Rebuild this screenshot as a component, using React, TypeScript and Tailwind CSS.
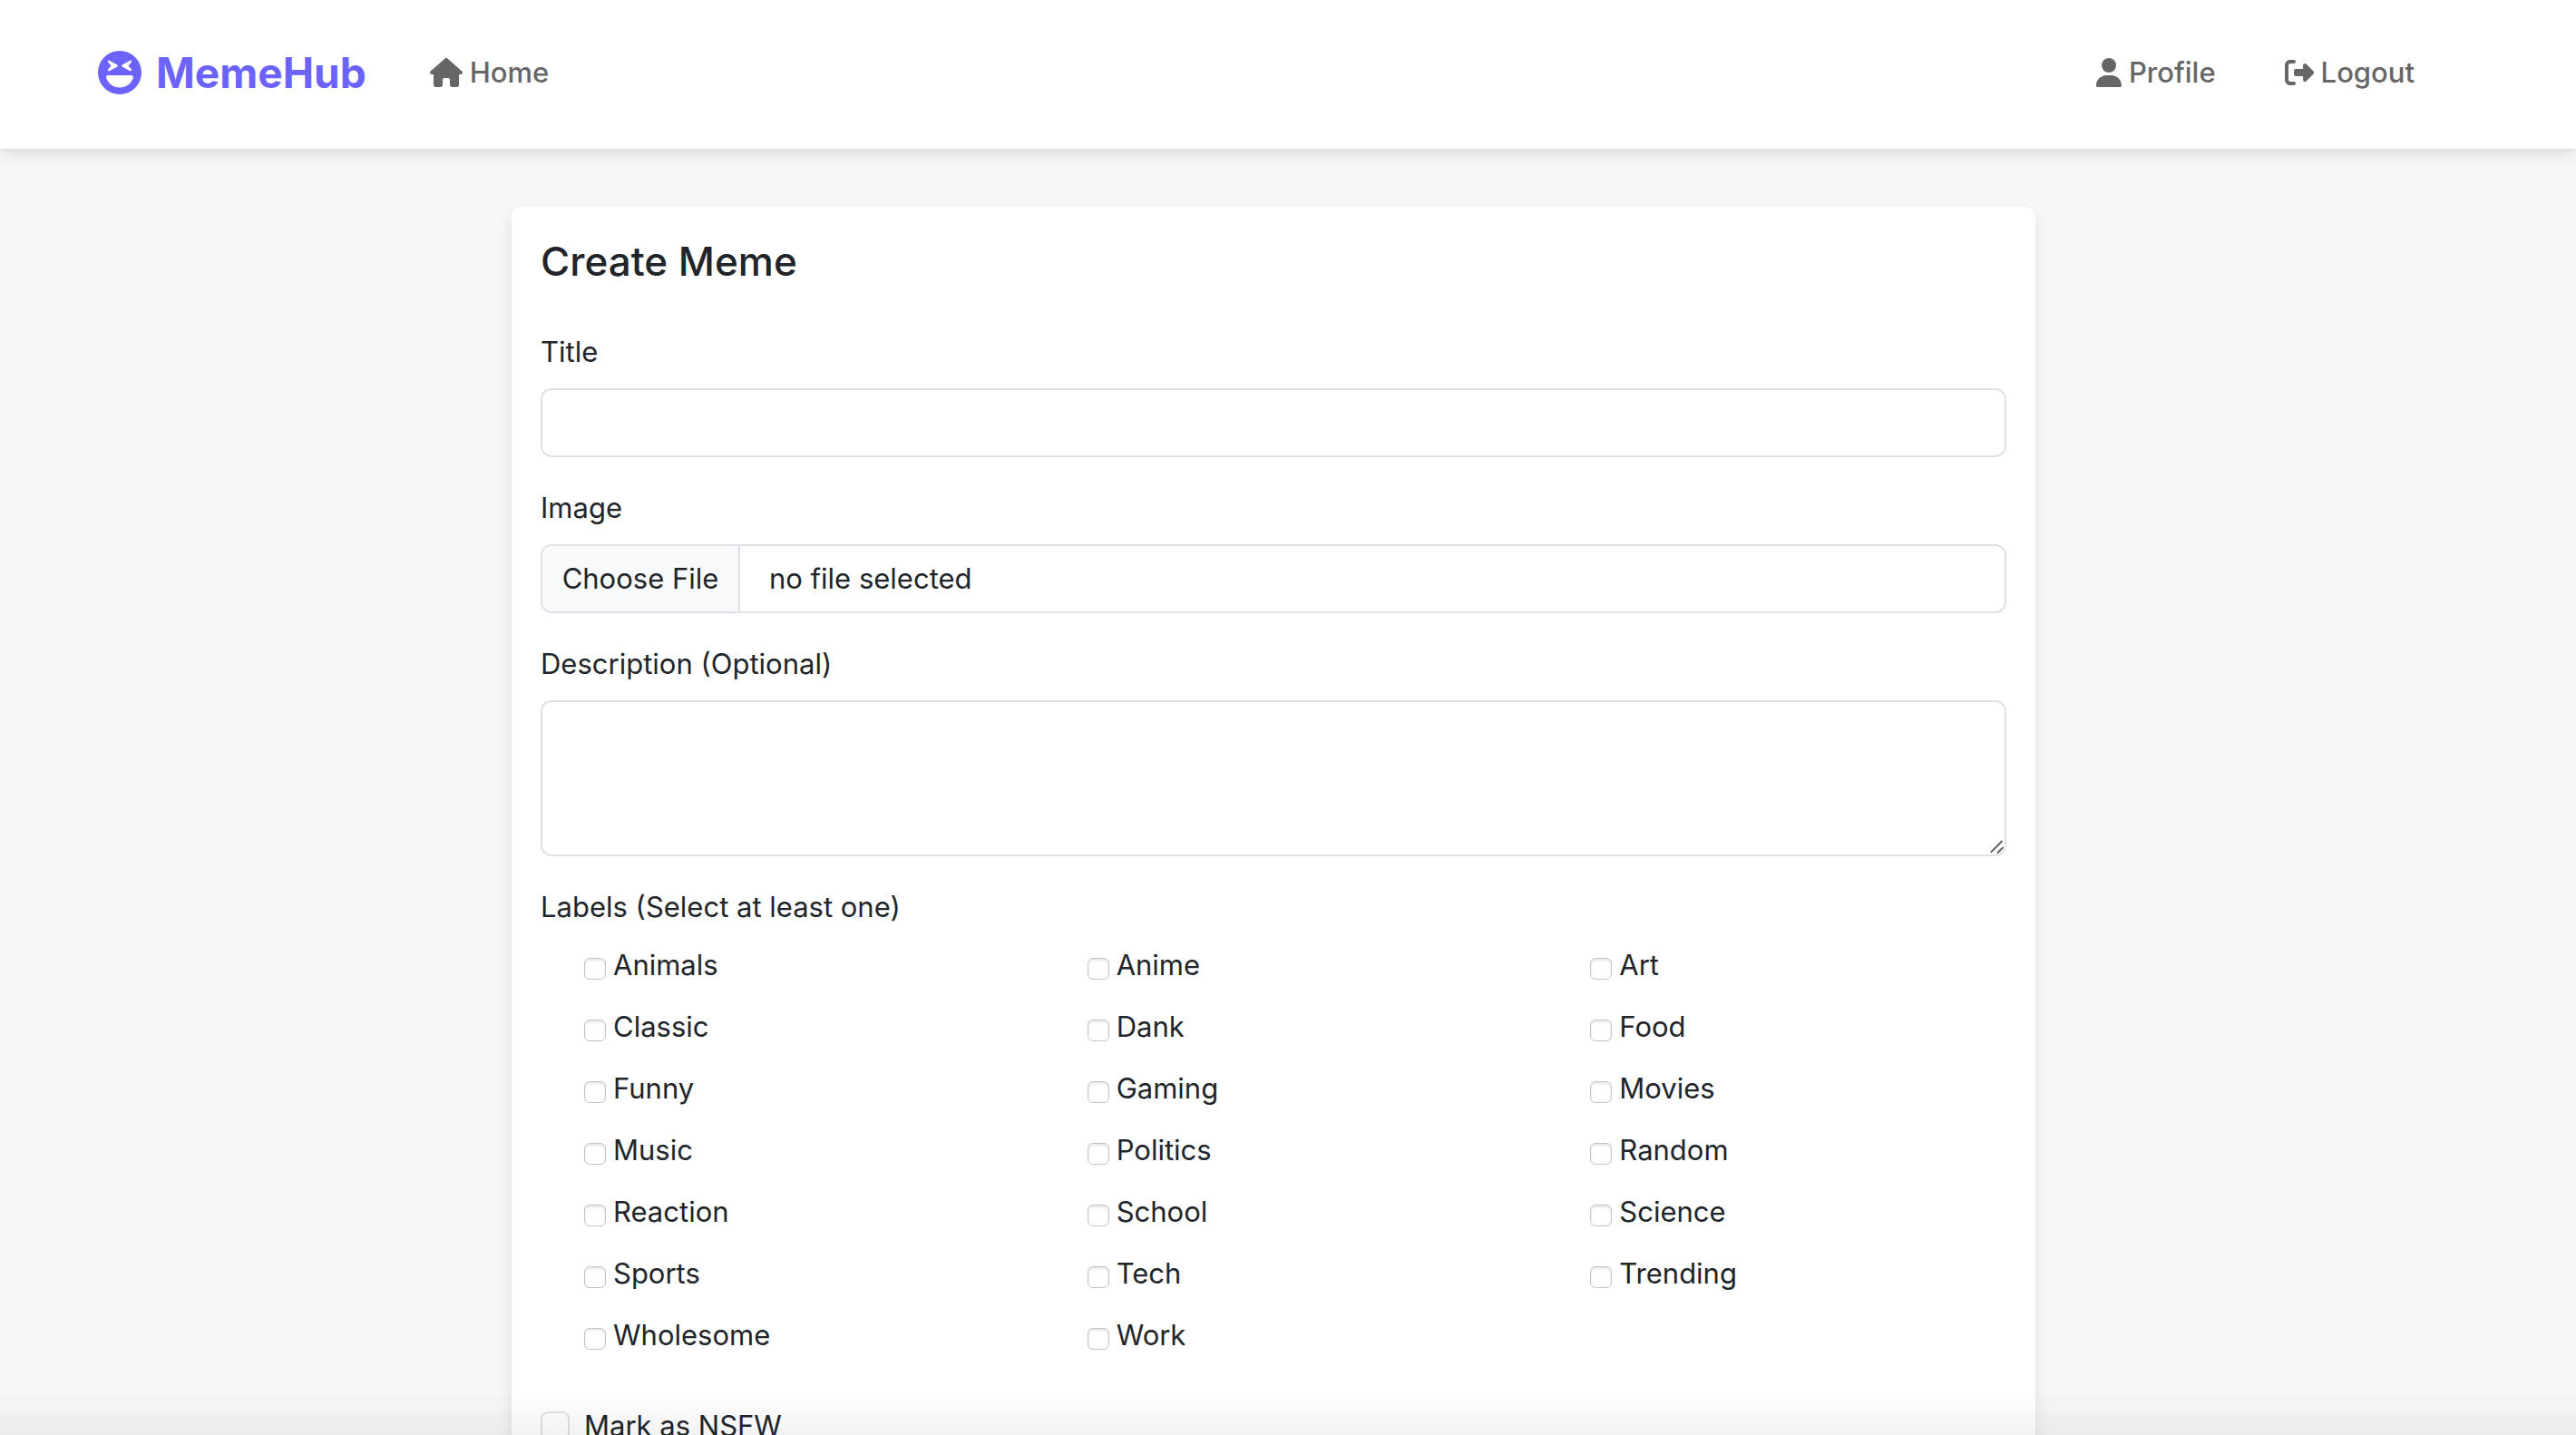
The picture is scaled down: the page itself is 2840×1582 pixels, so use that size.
import { useState } from "react";
import { FaFaceLaughSquint, FaHouse, FaRightFromBracket, FaUser } from "react-icons/fa6";

const LABELS = [
  "Animals", "Anime", "Art",
  "Classic", "Dank", "Food",
  "Funny", "Gaming", "Movies",
  "Music", "Politics", "Random",
  "Reaction", "School", "Science",
  "Sports", "Tech", "Trending",
  "Wholesome", "Work",
];

function Navbar() {
  return (
    <header className="relative z-10 shrink-0 bg-white shadow-[0_4px_16px_rgba(0,0,0,0.13)]">
      <nav className="flex h-[164px] items-center pr-[178px] pb-1 pl-[108px] font-medium text-[#666666]">
        <a href="#" className="flex items-center gap-4 text-[46px] font-bold text-[#6c63ff]">
          <FaFaceLaughSquint className="size-12" />
          MemeHub
        </a>
        <a href="#home" className="ml-[70px] flex items-center gap-2">
          <FaHouse className="h-8 w-9" />
          Home
        </a>
        <a href="#profile" className="ml-auto flex items-center gap-2">
          <FaUser className="h-8 w-7" />
          Profile
        </a>
        <a href="#logout" className="ml-[76px] flex items-center gap-2">
          <FaRightFromBracket className="size-8" />
          Logout
        </a>
      </nav>
    </header>
  );
}

function FileField() {
  const [name, setName] = useState("no file selected");
  return (
    <div className="mb-8">
      <label htmlFor="image" className="mb-4 block">Image</label>
      <div className="flex h-[76px] items-center overflow-hidden rounded-xl border-2 border-[#dee2e6] bg-white">
        <input
          id="image"
          type="file"
          onChange={(e) => setName(e.target.files?.[0]?.name ?? "no file selected")}
          className="h-full w-[218px] shrink-0 overflow-hidden border-r-2 border-[#dee2e6] bg-[#f8f9fa] file:m-0 file:h-full file:w-[216px] file:bg-[#f8f9fa] file:p-0 file:text-[#212529]"
        />
        <span className="pl-8">{name}</span>
      </div>
    </div>
  );
}

function MemeForm() {
  return (
    <form className="mx-auto min-h-full w-full max-w-[1680px] rounded-t-xl bg-white p-8 shadow-[0_8px_16px_rgba(0,0,0,0.1)]">
      <h1 className="mb-12 text-[44px] leading-[56px] font-medium">Create Meme</h1>

      <div className="mb-8">
        <label htmlFor="title" className="mb-4 block">Title</label>
        <input id="title" type="text" className="block h-[76px] w-full rounded-xl border-2 border-[#dee2e6] bg-white px-6" />
      </div>

      <FileField />

      <div className="mb-8">
        <label htmlFor="description" className="mb-4 block">Description (Optional)</label>
        <div className="relative">
          <textarea id="description" className="block h-[172px] w-full resize-none rounded-xl border-2 border-[#dee2e6] bg-white px-6 py-3" />
          <svg viewBox="0 0 16 16" className="pointer-events-none absolute right-0.5 bottom-0.5 size-4" fill="none" stroke="#5c5c5c" strokeWidth="1.8" strokeLinecap="round">
            <path d="M1.5 13 13 1.5M8.500 14 14 8.500" />
          </svg>
        </div>
      </div>

      <fieldset className="mb-8">
        <legend className="mb-4">Labels (Select at least one)</legend>
        <div className="-mr-16 grid grid-cols-3 pl-4">
          {LABELS.map((label) => (
            <div key={label} className="flex h-[68px] items-start pl-8">
              <input
                id={label}
                type="checkbox"
                className="mt-4 size-6 appearance-none rounded-md border border-[#c3c3c3] bg-white shadow-[inset_0_2px_3px_rgba(0,0,0,0.1)] checked:bg-[#6c63ff]"
              />
              <label htmlFor={label} className="pl-2">{label}</label>
            </div>
          ))}
        </div>
      </fieldset>

      <div className="flex items-start gap-4">
        <input
          id="nsfw"
          type="checkbox"
          className="mt-2 size-8 appearance-none rounded-lg border-2 border-[#dee2e6] bg-white checked:bg-[#6c63ff]"
        />
        <label htmlFor="nsfw">Mark as NSFW</label>
      </div>
    </form>
  );
}

export default function App() {
  return (
    <div className="relative flex h-screen flex-col overflow-hidden bg-[#f7f7f7] font-[Inter,'Liberation_Sans',sans-serif] text-[31px] leading-[48px] text-[#212529]">
      <Navbar />
      <main className="flex-1 pt-16 pr-8">
        <MemeForm />
      </main>
      <div className="pointer-events-none absolute inset-x-0 bottom-0 h-12 bg-linear-to-b from-transparent to-black/5" />
    </div>
  );
}
